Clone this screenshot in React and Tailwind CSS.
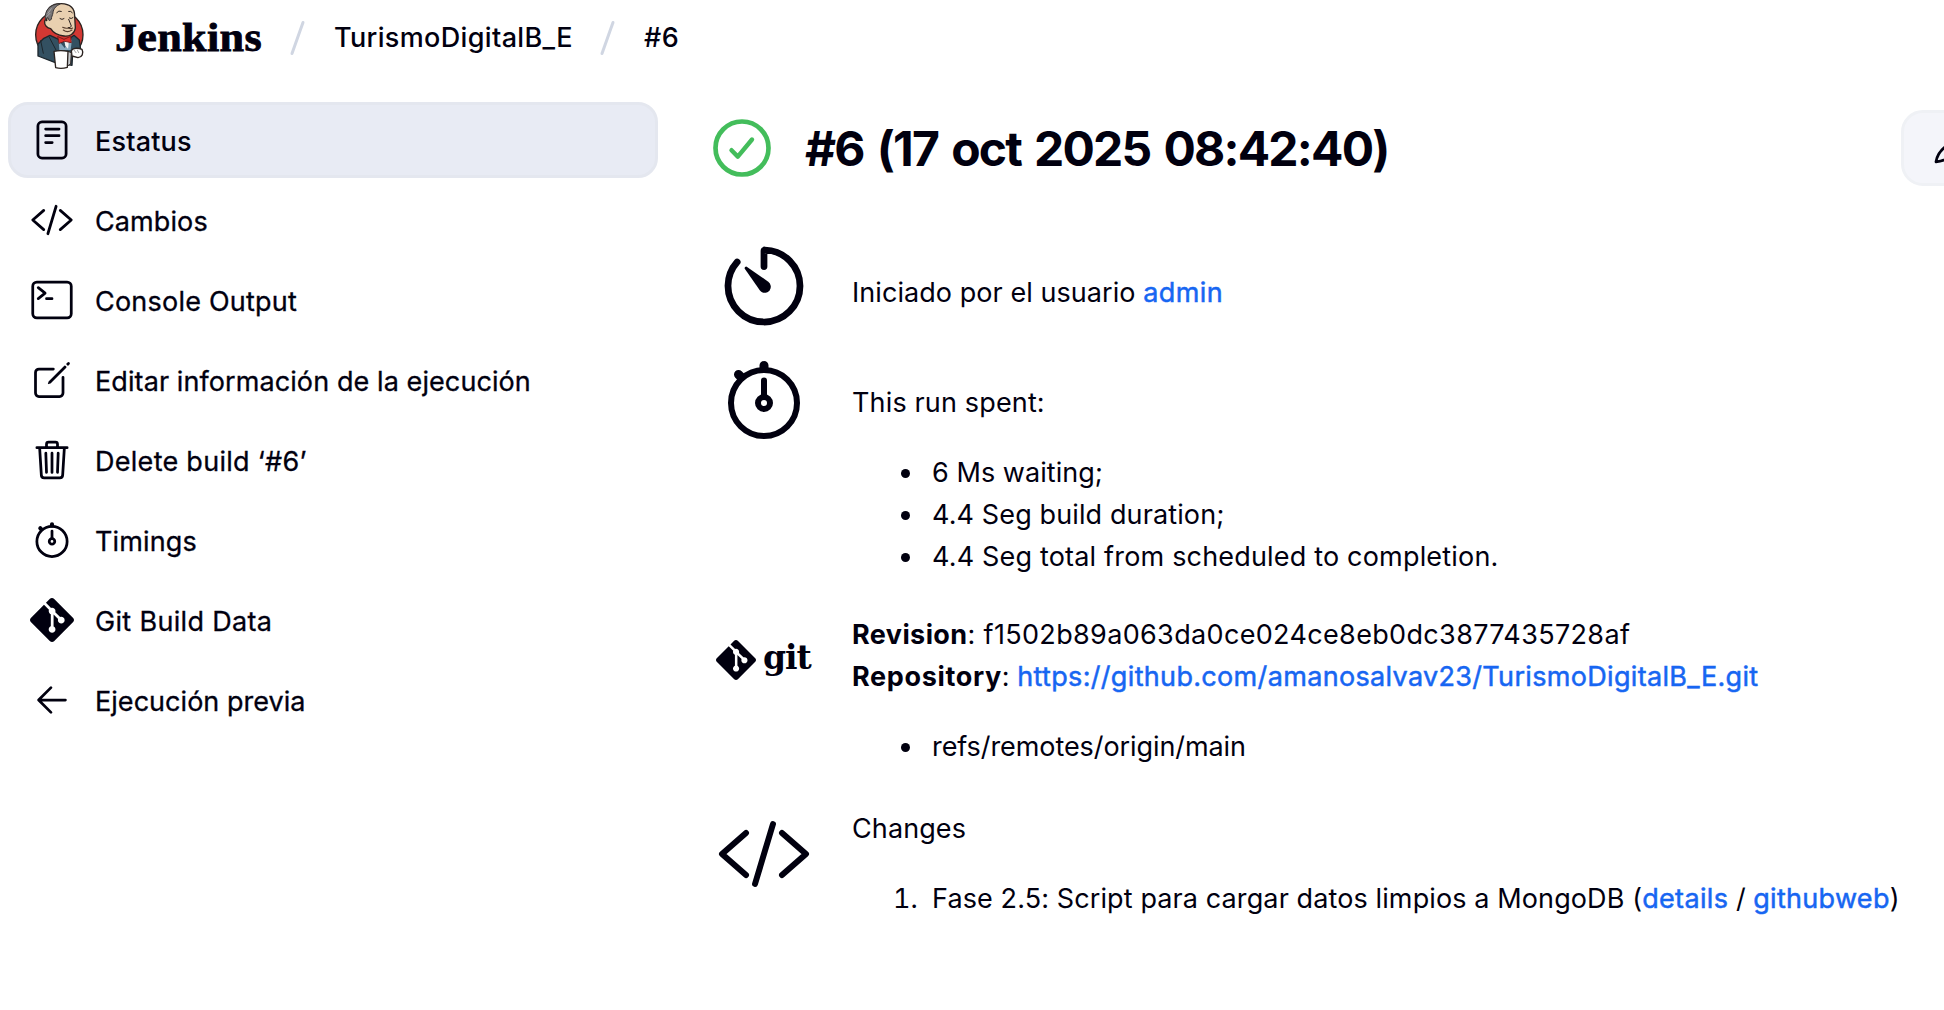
import { SiGit } from 'react-icons/si';

function Ion({ size = 'size-11', children }) {
  return (
    <svg
      viewBox="0 0 512 512"
      className={`${size} shrink-0`}
      fill="none"
      stroke="currentColor"
      strokeWidth="32"
      strokeLinecap="round"
      strokeLinejoin="round"
    >
      {children}
    </svg>
  );
}

const DocumentIcon = () => (
  <Ion>
    <rect x="92" y="46" width="328" height="420" rx="48" />
    <path d="M182 128h156M182 206h156M182 286h76" />
  </Ion>
);

const CodeIcon = ({ size }) => (
  <Ion size={size}>
    <path d="M160 368L32 256l128-112M352 368l128-112-128-112M304 96l-96 320" />
  </Ion>
);

const TerminalIcon = () => (
  <Ion>
    <rect x="32" y="48" width="448" height="416" rx="48" />
    <path d="M96 112l80 64-80 64M192 240h64" />
  </Ion>
);

const EditIcon = () => (
  <Ion>
    <path d="M384 224v184a40 40 0 01-40 40H104a40 40 0 01-40-40V168a40 40 0 0140-40h167.48" />
    <path
      fill="currentColor"
      stroke="none"
      d="M459.94 53.25a16.06 16.06 0 00-23.22-.56L424.35 65a8 8 0 000 11.31l11.34 11.32a8 8 0 0011.34 0l12.06-12c6.1-6.09 6.67-16.01.85-22.38zM399.34 90L218.82 270.2a9 9 0 00-2.31 3.93L208.16 299a3.91 3.91 0 004.86 4.86l24.85-8.35a9 9 0 003.93-2.31L422 112.66a9 9 0 000-12.66l-9.95-10a9 9 0 00-12.71 0z"
    />
  </Ion>
);

const TrashIcon = () => (
  <Ion>
    <path d="M112 112l20 320c.95 18.49 14.4 32 32 32h184c17.67 0 30.87-13.51 32-32l20-320M80 112h352M192 112V72a24 24 0 0124-24h80a24 24 0 0124 24v40M256 176v224M184 176l8 224M328 176l-8 224" />
  </Ion>
);

const StopwatchIcon = ({ size }) => (
  <Ion size={size}>
    <path d="M256 232v-80" />
    <path strokeWidth="48" d="M256 88V72M132 132l-12-12" />
    <circle cx="256" cy="272" r="32" />
    <circle cx="256" cy="272" r="176" />
  </Ion>
);

const BackIcon = () => (
  <Ion>
    <path d="M244 400L100 256l144-144M120 256h292" />
  </Ion>
);

const TimerIcon = () => (
  <Ion size="size-24">
    <path d="M112.91 128A191.85 191.85 0 0064 254c-1.18 106.35 85.65 193.8 192 194 106.2.2 192-85.83 192-192 0-104.54-83.55-189.61-187.5-192a4.36 4.36 0 00-4.5 4.37V152" strokeWidth="36" />
    <path
      fill="currentColor"
      stroke="none"
      d="M233.38 278.63l-79-113a8.13 8.13 0 0111.32-11.32l113 79a32.5 32.5 0 01-37.25 53.26 33.21 33.21 0 01-8.07-7.94z"
    />
  </Ion>
);

function Butler() {
  return (
    <svg viewBox="0 0 240 225" className="h-[75px] w-20 shrink-0" strokeLinejoin="round" strokeLinecap="round">
      <circle cx="118" cy="104" r="71" fill="#d33833" stroke="#2b2320" strokeWidth="4" />
      <path d="M54 132L70 116L90 106L116 118L140 122L162 106L178 120L182 150L158 158L156 196L106 188L54 168Z" fill="#335061" stroke="#1d262c" strokeWidth="4" />
      <path d="M116 122L134 144L156 118L152 150H118Z" fill="#86a8bd" />
      <path d="M133 122l14 2-3 22-8-8z" fill="#f4f4f2" />
      <path d="M80 52C76 24 98 10 124 11C150 12 164 26 164 48L166 84C164 102 148 110 132 108C112 106 98 96 92 86C82 84 72 76 74 64C75 58 78 58 80 62Z" fill="#e9d0b0" stroke="#2b2320" strokeWidth="4" />
      <path d="M76 58C72 34 88 12 122 11C108 18 100 26 99 38C98 46 94 50 94 58L88 62L84 54Z" fill="#777577" stroke="#3a3637" strokeWidth="3" />
      <path d="M84 40l10-14M80 50l10-10" stroke="#aaa9ab" strokeWidth="3" fill="none" />
      <path d="M110 38q6-8 14-4M146 34q7-2 11 4M120 56q6 5 12 0M148 54q6 4 11-1M146 58l8 20q-2 7-9 5" fill="none" stroke="#2b2320" strokeWidth="3" />
      <path d="M128 82q8 4 16 2q8 4 14 0M130 90q12 10 26 0" fill="none" stroke="#5a4030" strokeWidth="3.5" />
      <path d="M114 110L132 118L152 109L154 128L134 124L118 130Z" fill="#e0302c" stroke="#6d1513" strokeWidth="2.5" />
      <path d="M62 122L70 160M88 112L108 150" stroke="#1d262c" strokeWidth="3" fill="none" />
      <path d="M154 152C160 142 176 144 186 148C192 160 186 172 174 173L156 168Z" fill="#fff" stroke="#2b2320" strokeWidth="4" />
      <path d="M162 150l6 8M172 150l4 8" stroke="#777" strokeWidth="2" />
      <path d="M144 154L154 158L152 192L142 198Z" fill="#c9cdd0" stroke="#2b2320" strokeWidth="3" />
      <path d="M102 154Q122 150 144 154L142 202Q124 208 107 203Z" fill="#fff" stroke="#2b2320" strokeWidth="4" />
    </svg>
  );
}

const Slash = ({ className }) => (
  <svg viewBox="0 0 16 38" className={`${className} h-[38px] w-4 shrink-0`} fill="none">
    <path d="M2 34.5L13 3.5" stroke="#d0d6e2" strokeWidth="3" strokeLinecap="round" />
  </svg>
);

const NAV = [
  { label: 'Estatus', icon: <DocumentIcon />, tracking: 'tracking-[0.18px]', active: true },
  { label: 'Cambios', icon: <CodeIcon />, tracking: 'tracking-[0.1px]' },
  { label: 'Console Output', icon: <TerminalIcon />, tracking: 'tracking-[0.22px]' },
  { label: 'Editar información de la ejecución', icon: <EditIcon />, tracking: 'tracking-[0.09px]' },
  { label: 'Delete build ‘#6’', icon: <TrashIcon />, tracking: 'tracking-[0.28px]' },
  { label: 'Timings', icon: <StopwatchIcon />, tracking: 'tracking-[0.15px]' },
  { label: 'Git Build Data', icon: <SiGit className="size-11 shrink-0" />, tracking: 'tracking-[0.33px]' },
  { label: 'Ejecución previa', icon: <BackIcon />, tracking: 'tracking-[0.04px]' },
];

const Link = ({ children, className = '' }) => (
  <a href="#" className={`text-[#1766f2] [-webkit-text-stroke:0.5px_#1766f2] ${className}`}>{children}</a>
);

function Row({ icon, height, pad, children }) {
  return (
    <div className={`flex gap-10 ${height}`}>
      <div className="flex h-24 w-24 shrink-0 items-center">{icon}</div>
      <div className={`${pad} whitespace-nowrap`}>{children}</div>
    </div>
  );
}

export default function App() {
  return (
    <div className="h-[1010px] w-[1944px] overflow-hidden bg-white font-['Inter','Liberation_Sans',sans-serif] text-[27px] leading-[42px] text-[#01000f]">
      <header className="flex h-[75px] items-center pl-5">
        <Butler />
        <span className="ml-[15px] w-[160px] font-['Liberation_Serif',serif] text-[39px] font-bold">
          <span className="inline-block origin-left scale-x-[1.13] tracking-[0.3px] [-webkit-text-stroke:0.8px_#01000f]">Jenkins</span>
        </span>
        <Slash className="ml-[15px]" />
        <span className="ml-7 w-[246px] pt-px font-medium tracking-[0.35px]">TurismoDigitalB_E</span>
        <Slash className="ml-[20px]" />
        <span className="ml-[28px] pt-px font-medium tracking-[0.5px]">#6</span>
      </header>

      <div className="flex pt-[27px]">
        <nav className="ml-2 flex w-[650px] shrink-0 flex-col gap-1">
          {NAV.map((item) => (
            <a
              key={item.label}
              href="#"
              className={`flex h-[76px] items-center gap-[21px] rounded-[20px] border-[3px] pl-[19px] whitespace-nowrap ${
                item.active ? 'border-[#e4e7ef] bg-[#e8ebf4] font-medium' : 'border-transparent [-webkit-text-stroke:0.3px_#01000f]'
              }`}
            >
              {item.icon}
              <span className={`pt-[4px] ${item.tracking}`}>{item.label}</span>
            </a>
          ))}
        </nav>

        <main className="ml-[55px] flex w-[1231px] flex-col pt-2">
          <div className="flex h-[76px] shrink-0 items-center">
            <svg viewBox="0 0 58 58" className="size-[58px] shrink-0" fill="none" stroke="#43bd5b" strokeLinecap="round" strokeLinejoin="round">
              <circle cx="29" cy="29" r="26.5" strokeWidth="4.7" />
              <path d="M18.5 31.2L24.8 37.6L39 20.5" strokeWidth="4.4" />
            </svg>
            <h1 className="ml-[34px] w-[1096px] shrink-0 pt-px text-[48px] leading-[76px] font-bold tracking-[-1.8px] whitespace-nowrap [word-spacing:3.5px]">
              #6 (17 oct 2025 08:42:40)
            </h1>
            <button className="flex h-[76px] w-[200px] shrink-0 items-center rounded-[22px] border-[3px] border-[#eff1f5] bg-[#f4f5fa] pl-[28px]">
              <svg viewBox="0 0 44 44" className="size-11" fill="none" stroke="currentColor" strokeWidth="2.75" strokeLinejoin="round">
                <path d="M4 35.8C5 29 8 25 13 21L28 8L36 16L19 30C15 33.5 11 35 4 35.8Z" />
              </svg>
            </button>
          </div>

          <div className="ml-[3px] pt-[52px]">
            <Row icon={<TimerIcon />} height="h-[114px]" pad="pt-[34px]">
              <span className="tracking-[0.06px]">Iniciado por el usuario </span>
              <Link className="tracking-[0.4px]">admin</Link>
            </Row>

            <Row icon={<StopwatchIcon size="size-24" />} height="h-[260px]" pad="pt-[30px]">
              <p className="tracking-[0.15px]">This run spent:</p>
              <ul className="mt-7 list-disc pl-[73px]">
                <li className="pl-[7px] tracking-[0.05px]">6 Ms waiting;</li>
                <li className="pl-[7px] tracking-[0.12px]">4.4 Seg build duration;</li>
                <li className="pl-[7px] tracking-[0.18px]">4.4 Seg total from scheduled to completion.</li>
              </ul>
            </Row>

            <Row
              height="h-[194px]"
              pad="pt-[2px]"
              icon={
                <>
                  <SiGit className="size-10 shrink-0" />
                  <span className="ml-[7px] -mt-[5px] font-['DejaVu_Serif',serif] text-[33px] font-bold tracking-[-1px]">git</span>
                </>
              }
            >
              <p>
                <b className="tracking-[0.4px]">Revision</b>
                <span className="tracking-[0.34px]">: f1502b89a063da0ce024ce8eb0dc3877435728af</span>
              </p>
              <p>
                <b className="tracking-[0.65px]">Repository</b>
                <span>: </span>
                <Link className="tracking-[0.33px]">https://github.com/amanosalvav23/TurismoDigitalB_E.git</Link>
              </p>
              <ul className="mt-7 list-disc pl-[73px]">
                <li className="pl-[7px] tracking-[-0.08px]">refs/remotes/origin/main</li>
              </ul>
            </Row>

            <Row icon={<CodeIcon size="size-24" />} height="h-[114px]" pad="pt-[2px]">
              <p className="tracking-[0.1px]">Changes</p>
              <ol className="mt-7 list-decimal pl-[73px]">
                <li className="pl-[7px]">
                  <span className="tracking-[0.11px]">Fase 2.5: Script para cargar datos limpios a MongoDB (</span>
                  <Link className="tracking-[0.35px]">details</Link>
                  <span> / </span>
                  <Link className="tracking-[0.3px]">githubweb</Link>
                  <span>)</span>
                </li>
              </ol>
            </Row>
          </div>
        </main>
      </div>
    </div>
  );
}
